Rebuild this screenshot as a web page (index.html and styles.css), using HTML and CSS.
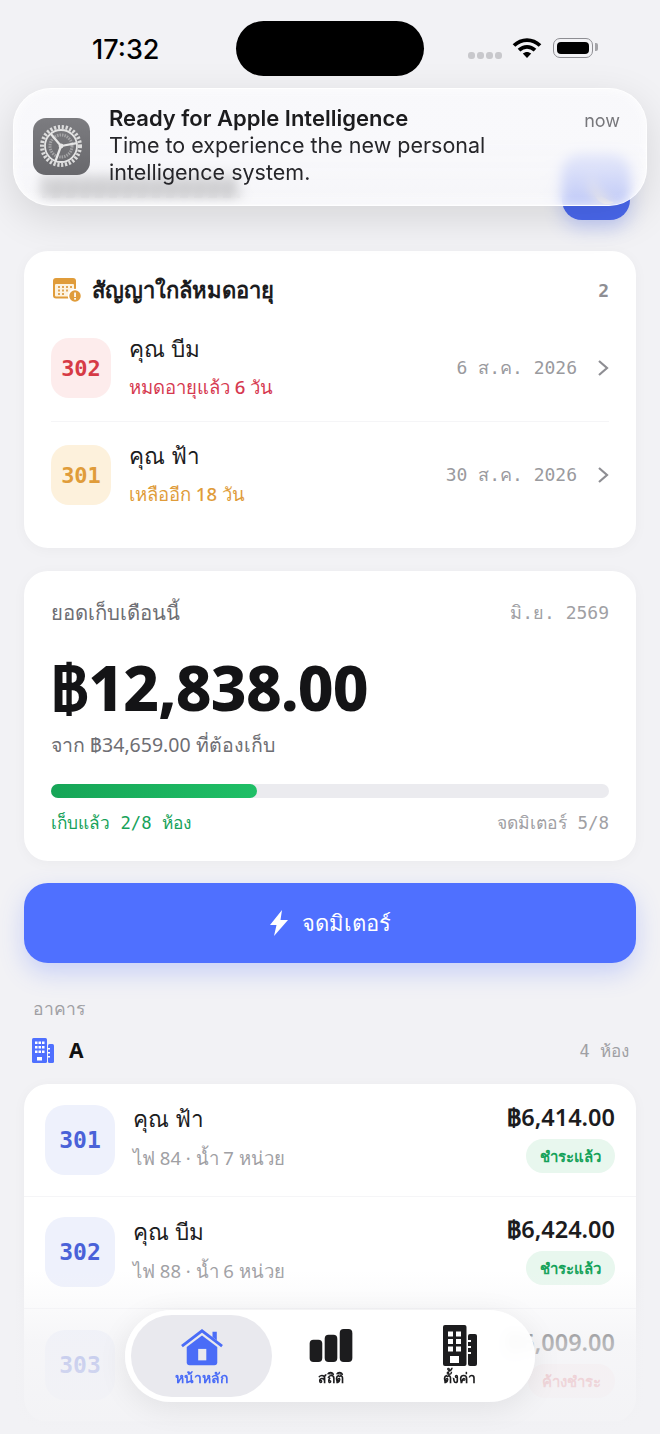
FILE: index.html
```html
<!DOCTYPE html>
<html lang="th">
<head>
  <meta charset="UTF-8" />
  <title>หน้าหลัก</title>
  <link rel="stylesheet" href="styles.css">
</head>
<body>
<div class="screen">

  <div class="status">
    <span class="time">17:32</span>
    <div class="island"></div>
    <div class="status-icons">
      <span class="dots"><i></i><i></i><i></i><i></i></span>
      <svg class="wifi" width="30" height="22" viewBox="0 0 30 22">
        <path d="M2 8.500C9.500 1.200 20.500 1.200 28 8.500M7 13.200c4.800-4.500 11.200-4.500 16 0" fill="none" stroke="#000" stroke-width="3.800"/>
        <path d="M10.800 16.600c2.600-2.200 5.800-2.200 8.400 0L15 21z" fill="#000"/>
      </svg>
      <span class="battery"><b></b></span>
    </div>
  </div>

  <div class="header">
    <!-- page title sits under the notification, only its blur shows -->
    <div class="title-smudge"></div>
    <div class="moon-btn">
      <svg width="34" height="44" viewBox="0 0 34 44"><path d="M8 4c-2 14 6 28 22 32C18 44 2 28 8 4z" fill="#ffe08a"/></svg>
    </div>
  </div>

  <div class="notif">
    <div class="notif-icon">
      <svg width="50" height="50" viewBox="0 0 50 50">
        <circle cx="25" cy="25" r="19" fill="none" stroke="#dcdcdc" stroke-width="4" stroke-dasharray="2.200 1.700"/>
        <circle cx="25" cy="25" r="16" fill="none" stroke="#e4e4e4" stroke-width="1.800"/>
        <circle cx="25" cy="25" r="11" fill="none" stroke="#a4a4a6" stroke-width="3" stroke-dasharray="1.500 1"/>
        <path d="M25 25L14.700 12.700M25 25L40.800 22.200M25 25L19.500 40" stroke="#e6e6e6" stroke-width="2.200" fill="none"/>
        <circle cx="25" cy="25" r="2.400" fill="#e6e6e6"/>
      </svg>
    </div>
    <div class="notif-text">
      <div class="notif-title">Ready for Apple Intelligence</div>
      <div class="notif-body">Time to experience the new personal intelligence system.</div>
    </div>
    <span class="notif-time">now</span>
  </div>

  <main class="content">
    <section class="card expiring">
      <div class="card-head">
        <svg class="cal-icon" width="29" height="25" viewBox="0 0 29 25">
          <rect x="0" y="0" width="23" height="20.500" rx="3" fill="#e09c3a"/>
          <rect x="2" y="6" width="19" height="12.500" rx="1" fill="#fdf3e1"/>
          <g fill="#e0a655">
            <rect x="5" y="8" width="2" height="2"/><rect x="9" y="8" width="2" height="2"/><rect x="13" y="8" width="2" height="2"/><rect x="17" y="8" width="2" height="2"/>
            <rect x="5" y="11.500" width="2" height="2"/><rect x="9" y="11.500" width="2" height="2"/><rect x="13" y="11.500" width="2" height="2"/>
            <rect x="5" y="15" width="2" height="2"/><rect x="9" y="15" width="2" height="2"/>
          </g>
          <circle cx="22" cy="18" r="6.500" fill="#e09c3a" stroke="#fff" stroke-width="1.500"/>
          <rect x="21.200" y="14.500" width="1.700" height="4.500" fill="#fff"/>
          <rect x="21.200" y="20" width="1.700" height="1.700" fill="#fff"/>
        </svg>
        <h2>สัญญาใกล้หมดอายุ</h2>
        <span class="count mono">2</span>
      </div>
      <div class="exp-row">
        <div class="room-badge red mono">302</div>
        <div class="exp-info">
          <div class="name">คุณ บีม</div>
          <div class="exp-note red-text">หมดอายุแล้ว 6 วัน</div>
        </div>
        <span class="exp-date mono">6 ส.ค. 2026</span>
        <svg class="chev" width="12" height="18" viewBox="0 0 12 18"><path d="M2 2l8 7-8 7" fill="none" stroke="#8e8e93" stroke-width="2.200"/></svg>
      </div>
      <div class="exp-row">
        <div class="room-badge orange mono">301</div>
        <div class="exp-info">
          <div class="name">คุณ ฟ้า</div>
          <div class="exp-note orange-text">เหลืออีก 18 วัน</div>
        </div>
        <span class="exp-date mono">30 ส.ค. 2026</span>
        <svg class="chev" width="12" height="18" viewBox="0 0 12 18"><path d="M2 2l8 7-8 7" fill="none" stroke="#8e8e93" stroke-width="2.200"/></svg>
      </div>
    </section>

    <section class="card income">
      <div class="income-head">
        <span class="income-label">ยอดเก็บเดือนนี้</span>
        <span class="income-month mono">มิ.ย. 2569</span>
      </div>
      <div class="income-amount">฿12,838.00</div>
      <div class="income-sub">จาก ฿34,659.00 ที่ต้องเก็บ</div>
      <div class="progress"><div class="progress-fill" style="width:37%"></div></div>
      <div class="income-foot">
        <span class="paid-note mono">เก็บแล้ว 2/8 ห้อง</span>
        <span class="meter-note mono">จดมิเตอร์ 5/8</span>
      </div>
    </section>

    <button class="meter-btn">
      <svg width="18" height="26" viewBox="0 0 18 26"><path d="M12 0L0 15h6.500L4 26l14-16h-7.500z" fill="#fff"/></svg>
      จดมิเตอร์
    </button>

    <div class="section-label">อาคาร</div>
    <div class="building-head">
      <svg width="22" height="25" viewBox="0 0 22 25">
        <rect x="0" y="0" width="15" height="25" rx="1.500" fill="#4f70ff"/>
        <rect x="16" y="6" width="6" height="19" rx="1.500" fill="#4f70ff"/>
        <g fill="#fff">
          <rect x="3" y="3.500" width="2.500" height="2.500"/><rect x="6.500" y="3.500" width="2.500" height="2.500"/><rect x="10" y="3.500" width="2.500" height="2.500"/>
          <rect x="3" y="8" width="2.500" height="2.500"/><rect x="6.500" y="8" width="2.500" height="2.500"/><rect x="10" y="8" width="2.500" height="2.500"/>
          <rect x="3" y="12.500" width="2.500" height="2.500"/><rect x="6.500" y="12.500" width="2.500" height="2.500"/><rect x="10" y="12.500" width="2.500" height="2.500"/>
          <rect x="5" y="19" width="5" height="3.500"/>
          <rect x="16" y="10" width="2" height="1.500"/><rect x="16" y="14" width="2" height="1.500"/><rect x="16" y="18" width="2" height="1.500"/>
        </g>
      </svg>
      <span class="building-name">A</span>
      <span class="building-count mono">4 ห้อง</span>
    </div>

    <section class="card rooms">
      <div class="room-row">
        <div class="room-badge blue mono">301</div>
        <div class="room-info">
          <div class="name">คุณ ฟ้า</div>
          <div class="room-usage">ไฟ 84 · น้ำ 7 หน่วย</div>
        </div>
        <div class="room-right">
          <div class="room-amount">฿6,414.00</div>
          <span class="pill paid">ชำระแล้ว</span>
        </div>
      </div>
      <div class="room-row">
        <div class="room-badge blue mono">302</div>
        <div class="room-info">
          <div class="name">คุณ บีม</div>
          <div class="room-usage">ไฟ 88 · น้ำ 6 หน่วย</div>
        </div>
        <div class="room-right">
          <div class="room-amount">฿6,424.00</div>
          <span class="pill paid">ชำระแล้ว</span>
        </div>
      </div>
      <div class="room-row">
        <div class="room-badge blue mono">303</div>
        <div class="room-right">
          <div class="room-amount">฿6,009.00</div>
          <span class="pill due">ค้างชำระ</span>
        </div>
      </div>
    </section>
  </main>

  <div class="bottom-fade"></div>

  <nav class="tabbar">
    <div class="tab active">
      <svg width="42" height="38" viewBox="0 0 44 38">
        <path d="M1 18L22 2l21 16" fill="none" stroke="#4a6cf7" stroke-width="3"/>
        <path d="M33 3h4.500v9L33 8.500z" fill="#4a6cf7"/>
        <path d="M6 19L22 7l16 12v16a3 3 0 0 1-3 3H9a3 3 0 0 1-3-3z" fill="#4a6cf7"/>
        <rect x="18" y="21" width="8.500" height="12" fill="#e9e9ee"/>
      </svg>
      <span>หน้าหลัก</span>
    </div>
    <div class="tab stats">
      <svg width="44" height="33" viewBox="0 0 44 34">
        <rect x="0" y="11" width="13" height="23" rx="4" fill="#1c1c1e"/>
        <rect x="15.500" y="6" width="13" height="28" rx="4" fill="#1c1c1e"/>
        <rect x="31" y="0" width="13" height="34" rx="4" fill="#1c1c1e"/>
      </svg>
      <span>สถิติ</span>
    </div>
    <div class="tab">
      <svg width="34" height="41" viewBox="0 0 34 41">
        <rect x="0" y="0" width="23.500" height="41" rx="2" fill="#1c1c1e"/>
        <rect x="25" y="9" width="9" height="32" rx="2" fill="#1c1c1e"/>
        <g fill="#fff">
          <rect x="5" y="6.500" width="5" height="5"/><rect x="13" y="6.500" width="5" height="5"/>
          <rect x="5" y="14" width="5" height="5"/><rect x="13" y="14" width="5" height="5"/>
          <rect x="5" y="21.500" width="5" height="5"/><rect x="13" y="21.500" width="5" height="5"/>
          <rect x="7" y="31" width="9" height="7"/>
          <rect x="25" y="15" width="3" height="2"/><rect x="25" y="21" width="3" height="2"/><rect x="25" y="27" width="3" height="2"/>
        </g>
      </svg>
      <span>ตั้งค่า</span>
    </div>
  </nav>

</div>
</body>
</html>
```

FILE: styles.css
```css
* {
  box-sizing: border-box;
}
html, body {
  margin: 0;
  padding: 0;
}
body {
  font-family: "Noto Sans", "Noto Sans CJK SC", sans-serif;
  background: #f2f2f5;
  color: #1c1c1e;
}
.mono {
  font-family: "DejaVu Sans Mono", "Liberation Mono", monospace;
}
.screen {
  position: relative;
  width: 660px;
  height: 1434px;
  overflow: hidden;
  background: #f2f2f5;
}

/* status bar */
.status {
  height: 84px;
  padding: 21px 67px 0 92px;
  display: flex;
  align-items: flex-start;
  font-family: Inter, sans-serif;
}
.time {
  width: 144px;
  margin-top: 13px;
  font-size: 27px;
  line-height: 32px;
  font-weight: 500;
  color: #000;
}
.island {
  width: 188px;
  height: 55px;
  border-radius: 28px;
  background: #000;
}
.status-icons {
  margin-left: auto;
  margin-top: 16px;
  display: flex;
  align-items: center;
  gap: 10px;
}
.dots {
  display: flex;
  gap: 2px;
  margin-top: 15px;
}
.dots i {
  width: 7px;
  height: 7px;
  border-radius: 3px;
  background: #c8c8cc;
}
.battery {
  position: relative;
  width: 40px;
  height: 20px;
  padding: 3px;
  border: 1.500px solid #8e8e93;
  border-radius: 7px;
  margin-left: 1px;
}
.battery b {
  display: block;
  height: 100%;
  border-radius: 4px;
  background: #000;
}
.battery::after {
  content: "";
  position: absolute;
  right: -6px;
  top: 4px;
  width: 3px;
  height: 8px;
  border-radius: 0 2px 2px 0;
  background: #a4a4a8;
}

/* page header, mostly under the notification */
.header {
  height: 136px;
  padding: 0 30px;
  display: flex;
  align-items: flex-end;
  justify-content: space-between;
  margin-bottom: 31px;
}
.title-smudge {
  width: 198px;
  height: 24px;
  margin: 0 0 22px 12px;
  background: repeating-linear-gradient(100deg, #111 0 8px, rgba(17, 17, 17, 0.25) 8px 14px);
}
.moon-btn {
  width: 68px;
  height: 68px;
  padding: 14px 0 0 22px;
  border-radius: 20px;
  background: #4a68ee;
  box-shadow: 0 8px 18px rgba(79, 112, 255, 0.28);
}

/* notification banner */
.notif {
  position: absolute;
  left: 13px;
  top: 88px;
  width: 634px;
  height: 118px;
  padding: 16px 26px 0 19px;
  display: flex;
  border-radius: 38px;
  font-family: Inter, sans-serif;
  background: linear-gradient(rgba(248, 248, 251, 0.95), rgba(248, 248, 251, 0.95) 45%, rgba(248, 248, 251, 0.68));
  backdrop-filter: blur(6px);
  border: 1.500px solid rgba(255, 255, 255, 0.9);
  box-shadow: 0 12px 40px rgba(0, 0, 0, 0.12), inset 0 0 10px rgba(255, 255, 255, 0.8);
}
.notif-icon {
  width: 57px;
  height: 57px;
  margin-top: 13px;
  padding: 3px;
  border-radius: 13px;
  background: linear-gradient(#7c7c80, #68686c);
  flex: none;
}
.notif-text {
  margin-left: 19px;
  width: 420px;
}
.notif-title {
  font-size: 22px;
  line-height: 27px;
  font-weight: 600;
  color: #1c1c1e;
}
.notif-body {
  font-size: 21.500px;
  line-height: 27px;
  color: #26262a;
}
.notif-time {
  margin-left: auto;
  margin-top: 4px;
  font-size: 18px;
  line-height: 24px;
  color: #77777b;
}

/* cards */
.content {
  padding: 0 24px;
}
.card {
  background: #fff;
  border-radius: 24px;
  box-shadow: 0 2px 14px rgba(0, 0, 0, 0.035);
}
.expiring {
  height: 297px;
  padding: 24px 27px 0;
  margin-bottom: 23px;
}
.card-head {
  display: flex;
  align-items: center;
  height: 30px;
  margin-bottom: 10px;
}
.card-head h2 {
  margin: 0 0 3px 10px;
  font-size: 22px;
  line-height: 30px;
  font-weight: 600;
  color: #1c1c1e;
}
.cal-icon {
  margin-left: 2px;
}
.count {
  margin-left: auto;
  font-size: 18px;
  font-weight: 700;
  color: #8e8e93;
}
.exp-row {
  display: flex;
  align-items: center;
  height: 106.500px;
  border-bottom: 1px solid #f5f5f7;
}
.exp-row:last-child {
  border-bottom: none;
}
.room-badge {
  width: 60px;
  height: 60px;
  border-radius: 18px;
  display: flex;
  align-items: center;
  justify-content: center;
  font-size: 22px;
  font-weight: 700;
  flex: none;
}
.exp-row .room-badge {
  padding-top: 2px;
}
.red {
  background: #fdecec;
  color: #d63a45;
}
.orange {
  background: #fdf1dc;
  color: #e09c3a;
}
.blue {
  background: #eef1fc;
  color: #4a62d8;
}
.exp-info {
  margin-left: 18px;
  padding-bottom: 3px;
}
.name {
  font-size: 22.500px;
  line-height: 30px;
  font-weight: 500;
  color: #1c1c1e;
}
.exp-note {
  margin-top: 11px;
  font-size: 18.500px;
  line-height: 24px;
  font-weight: 500;
}
.red-text {
  color: #d63a50;
}
.orange-text {
  color: #e09c3a;
}
.exp-date {
  margin-left: auto;
  font-size: 18px;
  color: #9a9a9e;
}
.chev {
  margin-left: 20px;
}

.income {
  height: 290px;
  padding: 26px 27px 0;
  margin-bottom: 22px;
}
.income-head, .income-foot {
  display: flex;
  justify-content: space-between;
  align-items: center;
}
.income-label {
  font-size: 20.300px;
  line-height: 30px;
  font-weight: 500;
  color: #6e6e73;
}
.income-month {
  font-size: 18px;
  color: #a0a0a4;
}
.income-amount {
  margin-top: 24px;
  font-size: 62px;
  line-height: 72px;
  font-weight: 800;
  letter-spacing: -0.800px;
  color: #141416;
}
.income-sub {
  margin-top: 9px;
  font-size: 19.500px;
  line-height: 26px;
  color: #6e6e73;
}
.progress {
  margin-top: 26px;
  height: 14px;
  border-radius: 7px;
  background: #ebebef;
}
.progress-fill {
  height: 100%;
  border-radius: 7px;
  background: linear-gradient(90deg, #16a557, #1fbf66);
}
.income-foot {
  margin-top: 11px;
}
.paid-note {
  font-size: 17.300px;
  color: #16a25a;
}
.meter-note {
  font-size: 17.500px;
  color: #a0a0a4;
}

.meter-btn {
  width: 100%;
  height: 80px;
  display: flex;
  align-items: center;
  justify-content: center;
  gap: 14px;
  border: none;
  border-radius: 24px;
  background: #4f70ff;
  color: #fff;
  font-family: inherit;
  font-size: 22px;
  font-weight: 500;
  box-shadow: 0 10px 24px rgba(79, 112, 255, 0.25);
}
.section-label {
  margin: 33px 0 0 9px;
  font-size: 17.500px;
  line-height: 24px;
  color: #a0a0a4;
}
.building-head {
  display: flex;
  align-items: center;
  height: 30px;
  margin: 15px 0 19px;
  padding: 0 7px 0 8px;
}
.building-name {
  margin-left: 15px;
  font-size: 21px;
  font-weight: 700;
  color: #111;
}
.building-count {
  margin-left: auto;
  font-size: 17px;
  color: #a0a0a4;
}

.room-row {
  height: 112.500px;
  padding: 0 21px;
  display: flex;
  align-items: center;
  border-bottom: 1px solid #f5f5f7;
}
.rooms .room-badge {
  width: 70px;
  height: 70px;
  border-radius: 20px;
  font-size: 23px;
  font-weight: 700;
}
.room-info {
  margin-left: 18px;
  padding-bottom: 4px;
}
.room-usage {
  margin-top: 11px;
  font-size: 18.500px;
  line-height: 26px;
  color: #a0a0a4;
}
.room-right {
  margin-left: auto;
  margin-bottom: 4px;
  display: flex;
  flex-direction: column;
  align-items: flex-end;
  gap: 8px;
}
.room-amount {
  font-size: 23.500px;
  line-height: 28px;
  font-weight: 600;
  color: #1c1c1e;
}
.pill {
  height: 34px;
  padding: 0 14px;
  border-radius: 17px;
  font-size: 15px;
  line-height: 34px;
  font-weight: 600;
}
.paid {
  background: #e8f7ee;
  color: #16a25a;
}
.due {
  background: #fdecec;
  color: #e0505a;
}

/* tab bar, floats over the list */
.bottom-fade {
  position: absolute;
  left: 0;
  right: 0;
  bottom: 0;
  height: 164px;
  background: linear-gradient(rgba(242, 242, 245, 0), rgba(242, 242, 245, 0.72) 45%, rgba(242, 242, 245, 0.95));
}
.tabbar {
  position: absolute;
  left: 125px;
  top: 1310px;
  width: 410px;
  height: 92px;
  padding: 5px 11px 5px 6px;
  display: flex;
  border-radius: 46px;
  background: rgba(255, 255, 255, 0.92);
  backdrop-filter: blur(6px);
  box-shadow: 0 6px 30px rgba(0, 0, 0, 0.08);
}
.tab {
  flex: none;
  width: 129px;
  display: flex;
  flex-direction: column;
  align-items: center;
  justify-content: flex-end;
  gap: 2px;
  padding-bottom: 9px;
  font-size: 14px;
  line-height: 20px;
  font-weight: 600;
  color: #1c1c1e;
}
.tab.active {
  width: 141px;
  margin-right: -6px;
  border-radius: 41px;
  background: #e9e9ee;
  color: #4a6cf7;
}
.stats svg {
  margin-bottom: 4px;
}
```
